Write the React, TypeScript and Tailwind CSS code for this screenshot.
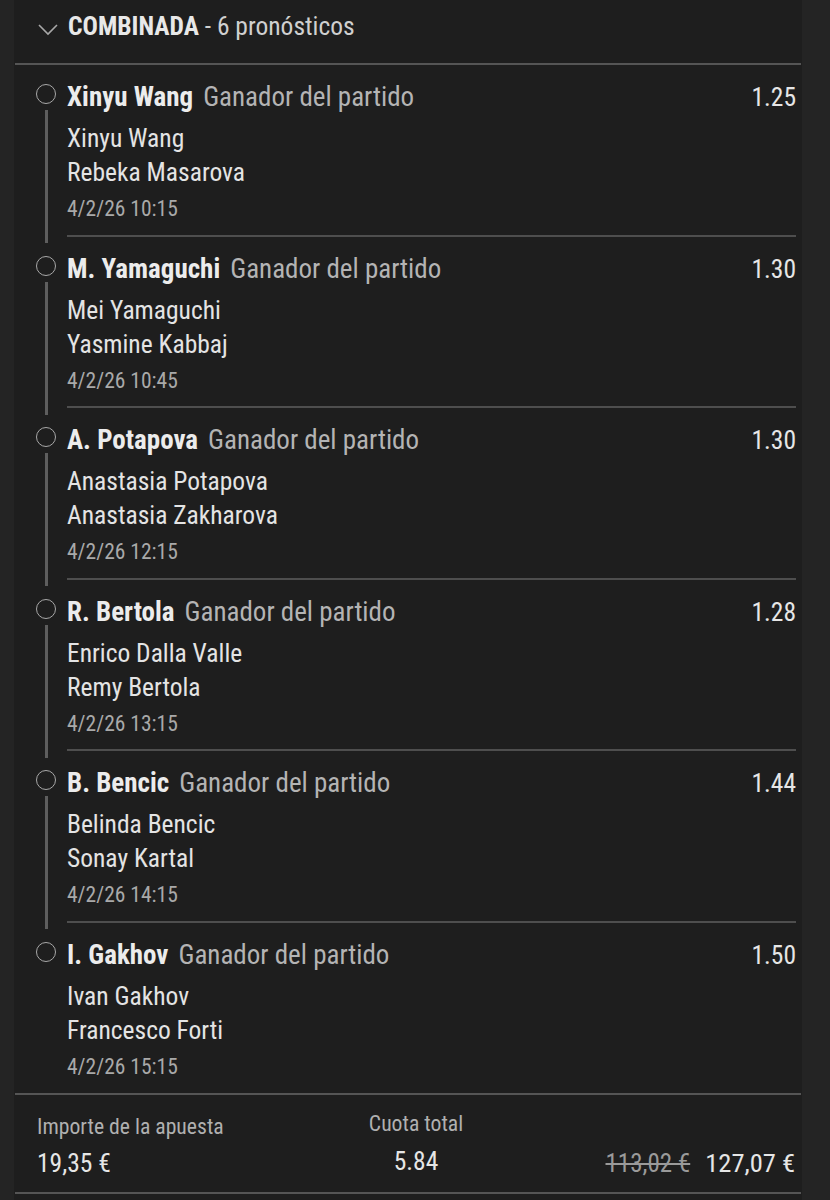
import React from "react";

type Leg = { sel: string; a: string; b: string; date: string; odds: string };

const legs: Leg[] = [
  { sel: "Xinyu Wang", a: "Xinyu Wang", b: "Rebeka Masarova", date: "4/2/26 10:15", odds: "1.25" },
  { sel: "M. Yamaguchi", a: "Mei Yamaguchi", b: "Yasmine Kabbaj", date: "4/2/26 10:45", odds: "1.30" },
  { sel: "A. Potapova", a: "Anastasia Potapova", b: "Anastasia Zakharova", date: "4/2/26 12:15", odds: "1.30" },
  { sel: "R. Bertola", a: "Enrico Dalla Valle", b: "Remy Bertola", date: "4/2/26 13:15", odds: "1.28" },
  { sel: "B. Bencic", a: "Belinda Bencic", b: "Sonay Kartal", date: "4/2/26 14:15", odds: "1.44" },
  { sel: "I. Gakhov", a: "Ivan Gakhov", b: "Francesco Forti", date: "4/2/26 15:15", odds: "1.50" },
];

const font = { fontFamily: '"Roboto Condensed", Roboto, "Liberation Sans", sans-serif', fontStretch: "condensed" } as React.CSSProperties;

function Row({ leg, last }: { leg: Leg; last: boolean }) {
  return (
    <div className="flex items-start">
      <div className="w-[53px] shrink-0 flex flex-col items-center pl-[11px] pt-[19px]">
        <div className="w-[20px] h-[20px] rounded-full border-[1.5px] border-[#a8a8a8]" />
        {!last && <div className="mt-[6px] w-[3px] h-[133px] -mb-[10px] bg-[#5e5e5e]" />}
      </div>
      <div className={"flex-1 mr-[6px] pt-[16px] pb-[11.5px] " + (last ? "" : "border-b-[2px] border-[#4e4e4e]")}>
        <div className="h-[32px] flex items-center justify-between">
          <div className="flex items-baseline gap-[10px] text-[27px] leading-[32px]">
            <span className="font-bold text-[#ececec]">{leg.sel}</span>
            <span className="text-[#b4b4b4]">Ganador del partido</span>
          </div>
          <span className="text-[25.5px] text-[#e6e6e6] leading-[32px]">{leg.odds}</span>
        </div>
        <div className="mt-[8px] text-[25.5px] leading-[34px] text-[#e4e4e4]">{leg.a}</div>
        <div className="text-[25.5px] leading-[34px] text-[#e4e4e4]">{leg.b}</div>
        <div className="mt-[6px] text-[21.5px] leading-[28px] text-[#a9a9a9]">{leg.date}</div>
      </div>
    </div>
  );
}

export default function App() {
  return (
    <div className="w-[830px] h-[1200px] bg-[#242424] pl-[14px] pr-[28px] overflow-hidden" style={font}>
      <div className="h-full bg-[#1e1e1e] flex flex-col">
        <div className="h-[65px] flex items-center border-b-[2px] border-[#555555] mr-[1px] ml-[1px]">
          <svg width="22" height="14" viewBox="0 0 22 14" className="ml-[22px] mt-[-4px]">
            <path d="M2 2 L11 11 L20 2" fill="none" stroke="#a8a8a8" strokeWidth="1.6" />
          </svg>
          <div className="ml-[9px] text-[25.5px] leading-[30px] mt-[-11px]">
            <span className="font-bold text-[#e8e8e8]">COMBINADA</span>
            <span className="text-[#d0d0d0]"> - 6 pronósticos</span>
          </div>
        </div>
        {legs.map((l, i) => (
          <Row key={i} leg={l} last={i === legs.length - 1} />
        ))}
        <div className="mt-[1px] mx-[1px] border-t-[2px] border-[#555555] border-b-[2px] h-[101px] flex items-start pt-[18px] pl-[22px] pr-[6px]">
          <div className="flex-1">
            <div className="text-[21.7px] leading-[28px] text-[#b0b0b0]">Importe de la apuesta</div>
            <div className="mt-[6px] text-[25.5px] leading-[32px] text-[#e6e6e6]">19,35 €</div>
          </div>
          <div className="flex flex-col items-center -mt-[3px]">
            <div className="text-[21.7px] leading-[28px] text-[#b0b0b0]">Cuota total</div>
            <div className="mt-[7px] text-[25.5px] leading-[32px] text-[#e6e6e6]">5.84</div>
          </div>
          <div className="flex-1 flex justify-end items-baseline gap-[15px] mt-[34px]">
            <span className="text-[25px] leading-[32px] text-[#9a9a9a] line-through">113,02 €</span>
            <span className="text-[26.5px] leading-[32px] text-[#e6e6e6]">127,07 €</span>
          </div>
        </div>
      </div>
    </div>
  );
}
